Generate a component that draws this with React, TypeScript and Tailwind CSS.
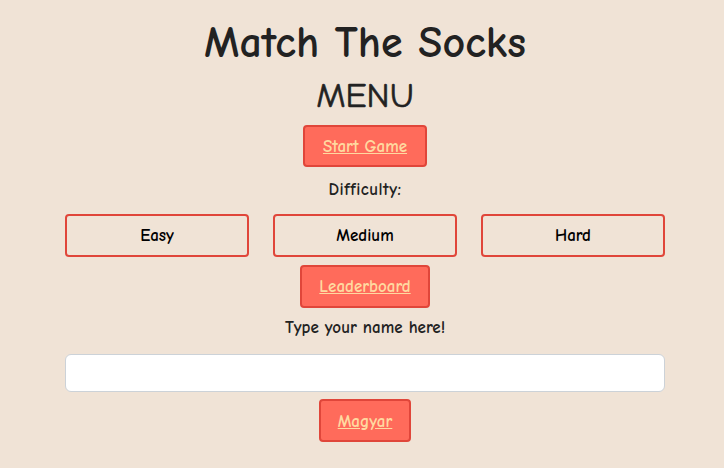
export default function App() {
  const font = { fontFamily: '"Comic Sans MS", "Comic Neue", "DejaVu Sans", sans-serif' };

  return (
    <div
      className="min-h-screen bg-[#f0e3d6] text-[#222] pl-[6px] flex flex-col items-center"
      style={font}
    >
      {/* Header */}
      <h1 className="text-[44px] font-bold leading-none mt-[21px] mb-[13px]">Match The Socks</h1>
      <h2 className="text-[35px] leading-none mb-[12px] [-webkit-text-stroke:0.6px_#222]">MENU</h2>

      <button className="h-[42px] px-[18px] pt-[2px] bg-[#ff6b5b] border-2 border-[#e0463a] rounded-[4px] text-[#ffd9a0] font-bold underline text-[17px]">
        Start Game
      </button>
      <p className="text-[17px] font-bold tracking-[0.5px] mt-[10px] mb-[11px]">Difficulty:</p>

      {/* Difficulty */}
      <div className="w-[600px] grid grid-cols-3 gap-[24px]">
        <button className="h-[43px] pt-[2px] border-2 border-[#e0463a] rounded-[4px] text-[17px] font-bold text-black">Easy</button>
        <button className="h-[43px] pt-[2px] border-2 border-[#e0463a] rounded-[4px] text-[17px] font-bold text-black">Medium</button>
        <button className="h-[43px] pt-[2px] border-2 border-[#e0463a] rounded-[4px] text-[17px] font-bold text-black">Hard</button>
      </div>

      <button className="mt-[8px] h-[43px] px-[17px] pt-[2px] bg-[#ff6b5b] border-2 border-[#e0463a] rounded-[4px] text-[#ffd9a0] font-bold underline text-[17px]">
        Leaderboard
      </button>
      <p className="text-[17px] font-bold mt-[7px] mb-[14px]">Type your name here!</p>

      <input className="w-[600px] h-[38px] bg-white border border-[#ccd2d8] rounded-[6px] px-3 outline-none" />

      <button className="mt-[7px] h-[43px] px-[17px] pt-[2px] bg-[#ff6b5b] border-2 border-[#e0463a] rounded-[4px] text-[#ffd9a0] font-bold underline text-[17px]">
        Magyar
      </button>
    </div>
  );
}
